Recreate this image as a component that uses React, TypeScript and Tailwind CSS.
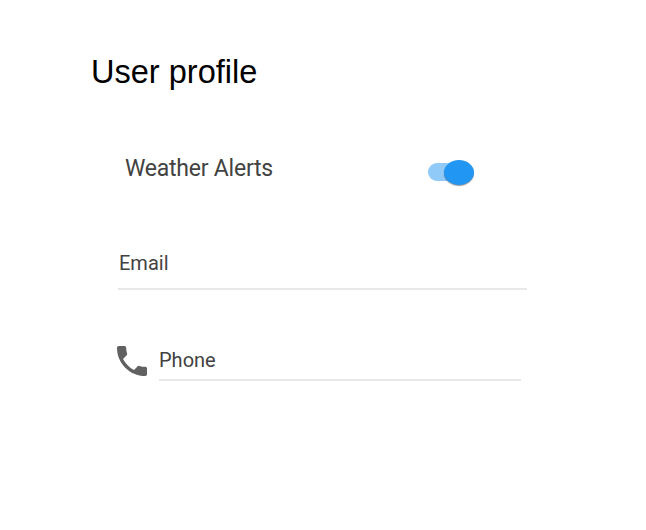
export default function App() {
  return (
    <main className="h-[530px] w-[646px] overflow-hidden bg-white font-['Roboto',sans-serif] text-[#424242]">
      <h1 className="ml-[91px] w-fit origin-left scale-x-[.957] pt-[51px] font-['Liberation_Sans',Arial,sans-serif] text-[34px] leading-[40px] text-black">User profile</h1>
      <div className="mt-[61px] ml-[125px] flex h-[32px] w-[349px] items-start justify-between">
        <span className="mt-px text-[23px] leading-[32px] tracking-[-0.23px]">Weather Alerts</span>
        <button role="switch" aria-checked="true" aria-label="Weather Alerts" className="mt-[8px] flex h-[25px] w-[46px] items-start">
          <span className="mt-[3px] h-[18px] w-[31px] rounded-full bg-[#90caf9]" />
          <span className="-ml-[15px] h-[25px] w-[30px] shrink-0 rounded-[50%] bg-[#2196f3] shadow-[0_1px_1px_rgba(0,0,0,0.4)]" />
        </button>
      </div>
      <div className="mt-[66px] ml-[118px] h-[40px] w-[409px] border-b-2 border-[#e8e8e8] pl-px text-[20px] leading-[26px]">Email</div>
      <div className="mt-[54px] ml-[117px] flex h-[37px]">
        <svg className="mt-[2px] h-[30px] w-[30px] fill-[#616161]" viewBox="3 3 18 18"><path d="M6.62 10.79c1.44 2.83 3.76 5.14 6.59 6.59l2.2-2.2c.27-.27.67-.36 1.02-.24 1.12.37 2.33.57 3.57.57.55 0 1 .45 1 1V20c0 .55-.45 1-1 1-9.39 0-17-7.61-17-17 0-.55.45-1 1-1h3.5c.55 0 1 .45 1 1 0 1.25.2 2.45.57 3.57.11.35.03.74-.25 1.02l-2.2 2.2z" /></svg>
        <div className="ml-[12px] h-[37px] w-[362px] border-b-2 border-[#e8e8e8] pt-[3px] text-[20px] leading-[26px]">Phone</div>
      </div>
    </main>
  );
}
